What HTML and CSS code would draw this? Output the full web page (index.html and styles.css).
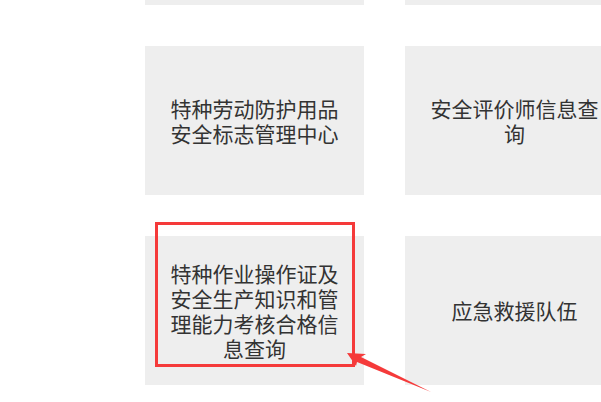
FILE: index.html
```html
<!DOCTYPE html>
<html lang="zh-CN">
<head>
<meta charset="utf-8">
<link rel="stylesheet" href="styles.css">
</head>
<body>
<div class="page">
  <div class="grid">
    <div class="card"></div>
    <div class="card"></div>
    <div class="card"><span class="label">特种劳动防护用品安全标志管理中心</span></div>
    <div class="card"><span class="label">安全评价师信息查询</span></div>
    <div class="card"><span class="label">特种作业操作证及安全生产知识和管理能力考核合格信息查询</span></div>
    <div class="card"><span class="label">应急救援队伍</span></div>
  </div>
  <div class="footer">
    <div class="footer-line"></div>
    <div class="footer-img"></div>
  </div>
  <div class="highlight"></div>
  <svg class="arrow" width="601" height="402" viewBox="0 0 601 402">
    <polygon points="347,353 366,354 361,357 431,392 357,362 356,366" fill="#f53a3a"/>
  </svg>
</div>
</body>
</html>
```
FILE: styles.css
```css
html, body {
  margin: 0;
  padding: 0;
  background: #fff;
  overflow: hidden;
}
.page {
  position: relative;
  width: 601px;
  height: 402px;
  overflow: hidden;
  font-family: "Noto Sans CJK SC", "Microsoft YaHei", sans-serif;
}
.grid {
  display: grid;
  grid-template-columns: 219px 219px;
  grid-auto-rows: 149px;
  column-gap: 41px;
  row-gap: 41px;
  margin-left: 145px;
  margin-top: -144px;
}
.card {
  background: #eeeeee;
  display: flex;
  align-items: center;
  justify-content: center;
  padding: 0 22px;
  text-align: center;
}
.label {
  font-size: 21px;
  line-height: 25px;
  color: #333;
}
.footer {
  display: flex;
  margin-top: 17px;
  gap: 35px;
}
.footer-line {
  width: 230px;
  height: 2px;
  background: #eeeeee;
}
.footer-img {
  width: 231px;
  height: 2px;
  background: linear-gradient(90deg, #222 0%, #6a6a8a 20%, #3a7fd8 30%, #55406a 45%, #3a7fd8 60%, #6a4a6a 75%, #4a8ae0 88%, #222 100%);
}
.highlight {
  position: absolute;
  left: 155px;
  top: 222px;
  width: 194px;
  height: 139px;
  border: 3px solid #f53a3a;
}
.arrow {
  position: absolute;
  left: 0;
  top: 0;
}
```
